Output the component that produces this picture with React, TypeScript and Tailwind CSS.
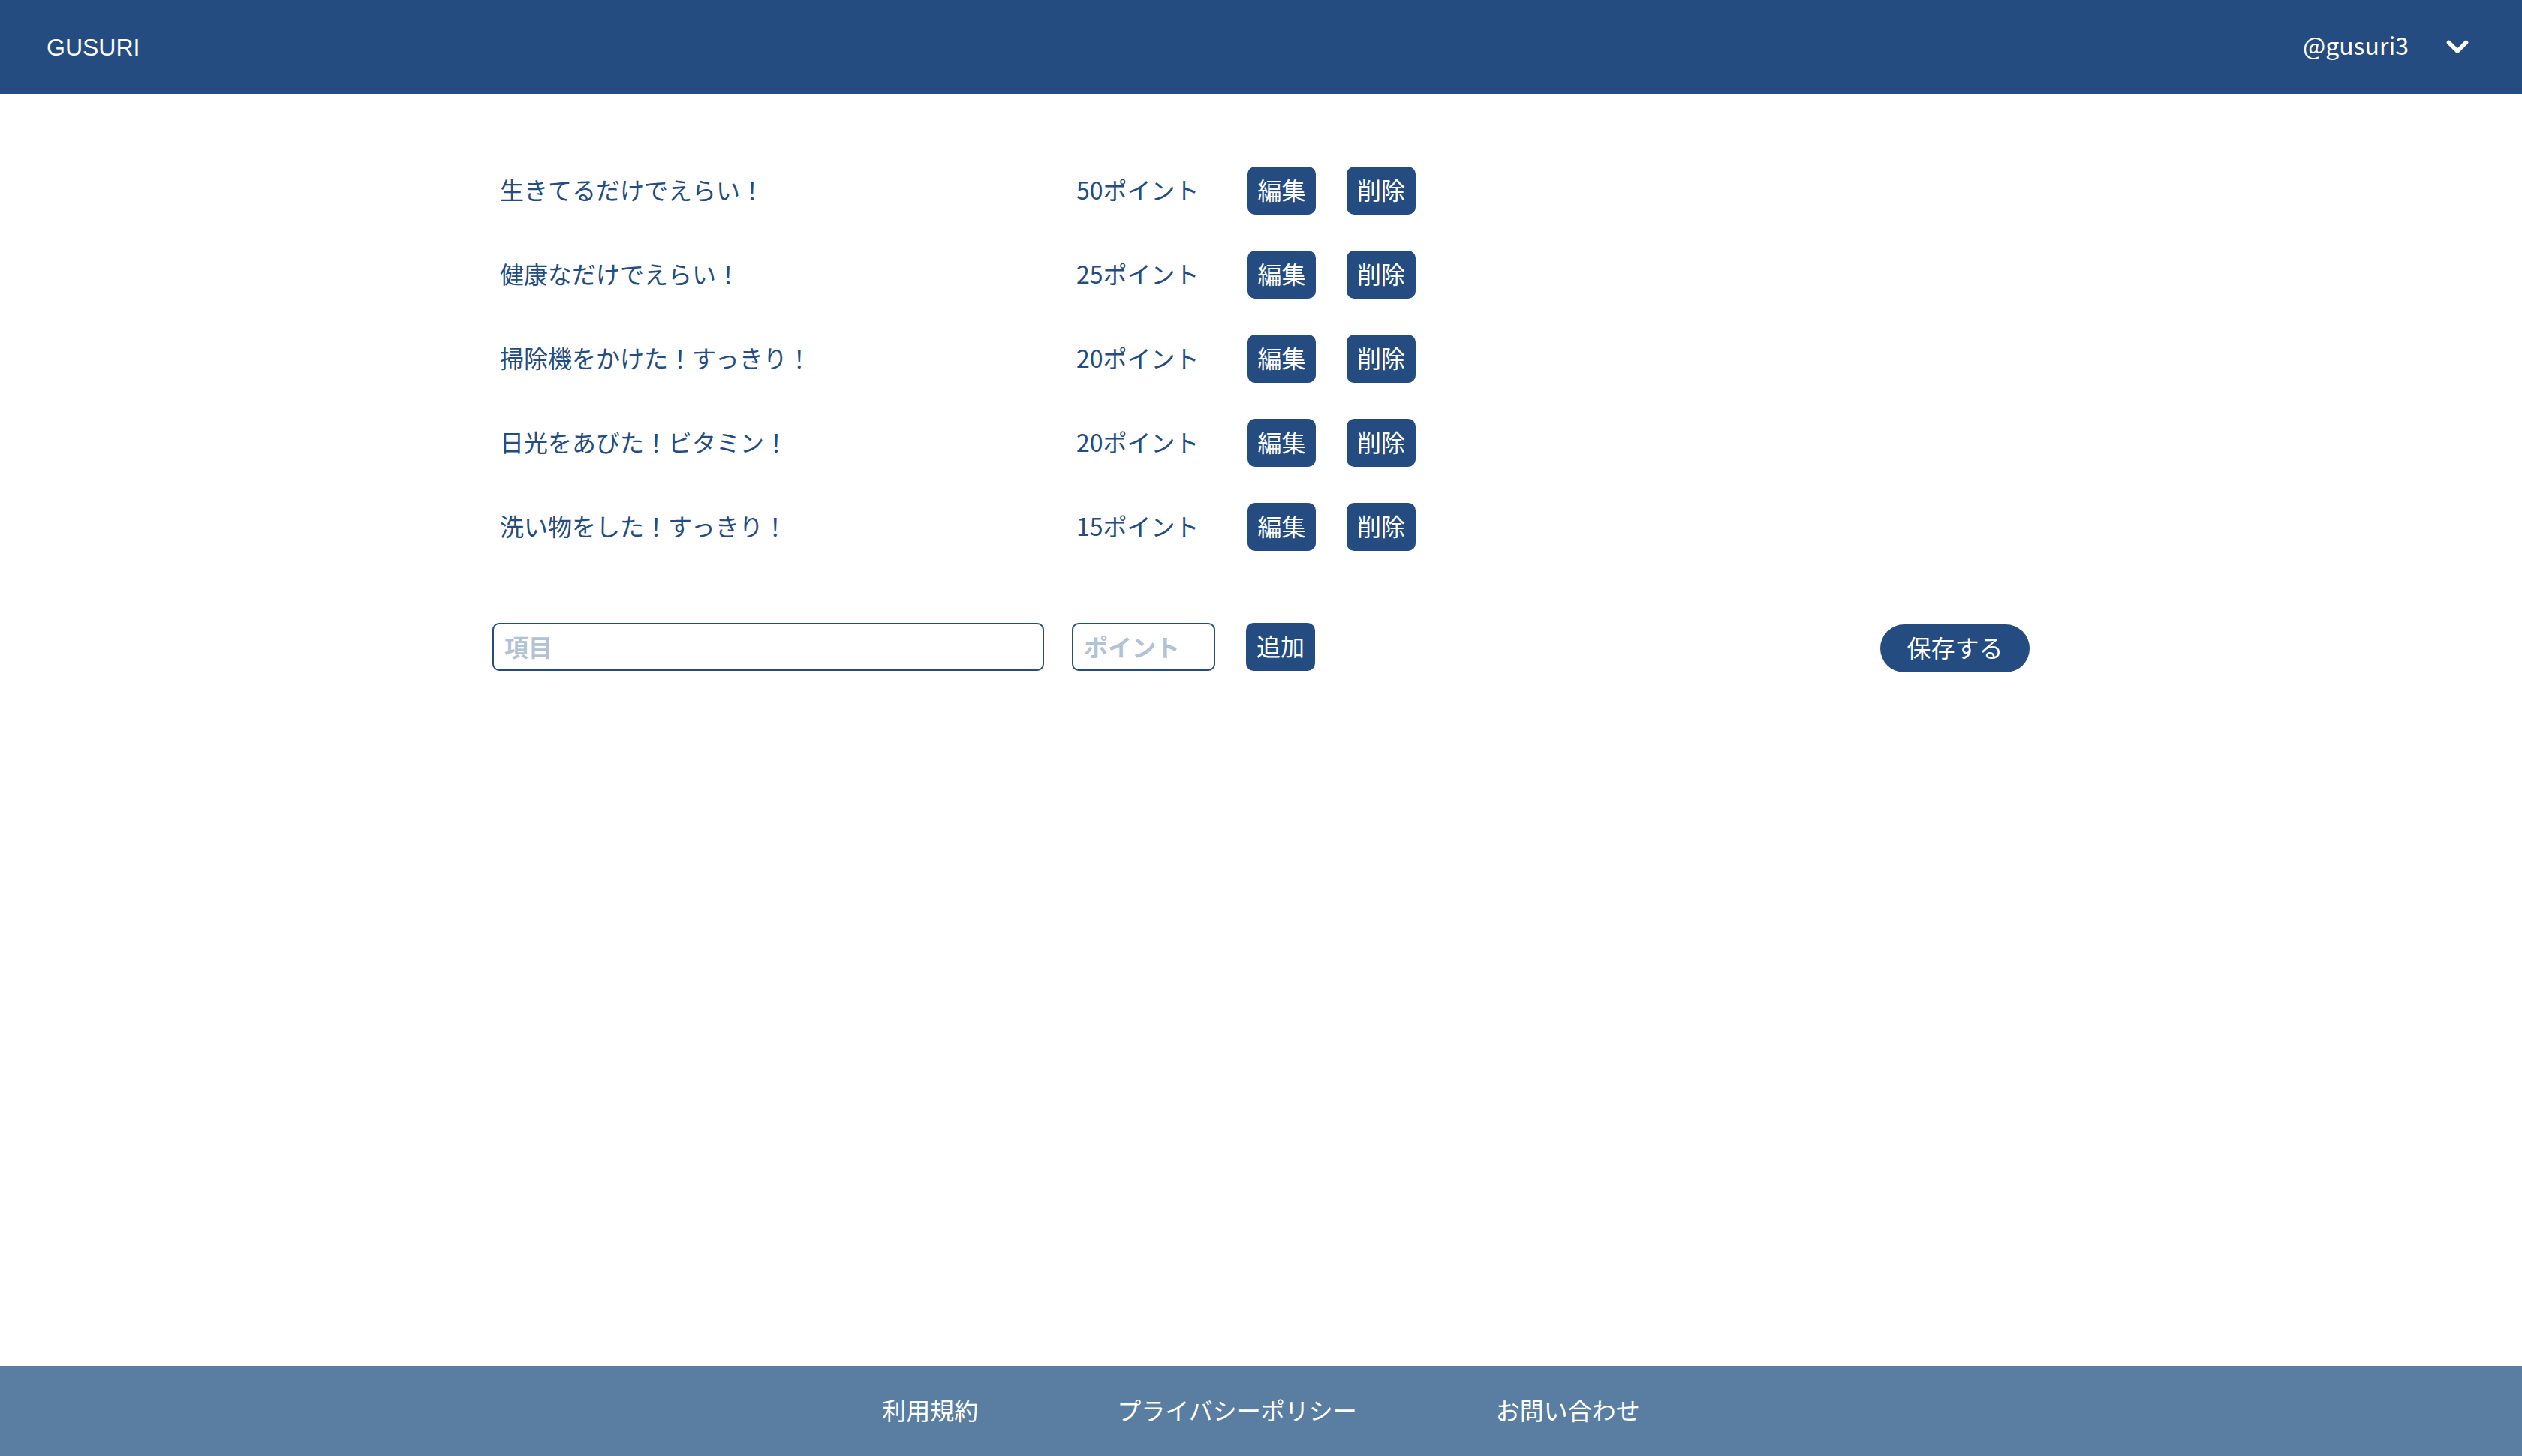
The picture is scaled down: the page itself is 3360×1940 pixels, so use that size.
import React from "react";

const items = [
  { title: "生きてるだけでえらい！", point: 50 },
  { title: "健康なだけでえらい！", point: 25 },
  { title: "掃除機をかけた！すっきり！", point: 20 },
  { title: "日光をあびた！ビタミン！", point: 20 },
  { title: "洗い物をした！すっきり！", point: 15 },
];

const jp = { fontFamily: '"Noto Sans CJK JP", "Noto Sans", sans-serif' };

export default function App() {
  return (
    <div className="h-screen overflow-hidden flex flex-col bg-white" style={jp}>
      <header className="h-[125px] shrink-0 bg-[#244c80] flex items-center justify-between pl-[62px] pr-[71px] text-white">
        <div className="text-[32px] leading-none" style={{ fontFamily: '"Liberation Sans", Arial, sans-serif' }}>
          GUSURI
        </div>
        <div className="flex items-center">
          <span className="text-[32px] leading-none pb-[8px]">@gusuri3</span>
          <svg className="ml-[50px]" width="30" height="20" viewBox="0 0 30 20" fill="none">
            <polyline points="3.5,3.5 15,15 26.5,3.5" stroke="white" strokeWidth="5.5" strokeLinecap="round" strokeLinejoin="round" />
          </svg>
        </div>
      </header>

      <main className="flex-1 w-[2048px] mx-auto pt-[97px]">
        <div className="flex flex-col gap-[48px] pl-[10px]">
          {items.map((it, i) => (
            <div key={i} className="flex items-center h-[64px]">
              <div className="w-[768px] text-[32px] leading-none text-[#244c80] pb-[4px]">{it.title}</div>
              <div className="w-[228px] text-[32px] leading-none text-[#244c80] pb-[4px]">{it.point}ポイント</div>
              <button className="w-[91px] h-[64px] pb-[4px] rounded-[10px] bg-[#244c80] text-white text-[32px] leading-none flex items-center justify-center">
                編集
              </button>
              <button className="ml-[41px] w-[92px] h-[64px] pb-[4px] rounded-[10px] bg-[#244c80] text-white text-[32px] leading-none flex items-center justify-center">
                削除
              </button>
            </div>
          ))}
        </div>

        <div className="mt-[96px] flex items-start justify-between">
          <div className="flex items-center">
            <input
              placeholder="項目"
              className="w-[735px] h-[64px] border-2 border-[#244c80] rounded-[9px] px-[14px] pb-[3px] text-[32px] font-bold text-[#244c80] placeholder:text-[#b1c2d4] outline-none"
            />
            <input
              placeholder="ポイント"
              className="ml-[37px] w-[191px] h-[64px] border-2 border-[#244c80] rounded-[9px] px-[14px] pb-[3px] text-[32px] font-bold text-[#244c80] placeholder:text-[#b1c2d4] outline-none"
            />
            <button className="ml-[41px] w-[92px] h-[64px] pb-[4px] rounded-[10px] bg-[#244c80] text-white text-[32px] leading-none flex items-center justify-center">
              追加
            </button>
          </div>
          <button className="mt-[2px] w-[199px] h-[64px] pb-[4px] rounded-full bg-[#244c80] text-white text-[32px] leading-none flex items-center justify-center">
            保存する
          </button>
        </div>
      </main>

      <footer className="h-[120px] shrink-0 bg-[#5a7ea2] flex items-center justify-center gap-[185px] pb-[4px] text-white text-[32px] leading-none">
        <span>利用規約</span>
        <span>プライバシーポリシー</span>
        <span>お問い合わせ</span>
      </footer>
    </div>
  );
}
